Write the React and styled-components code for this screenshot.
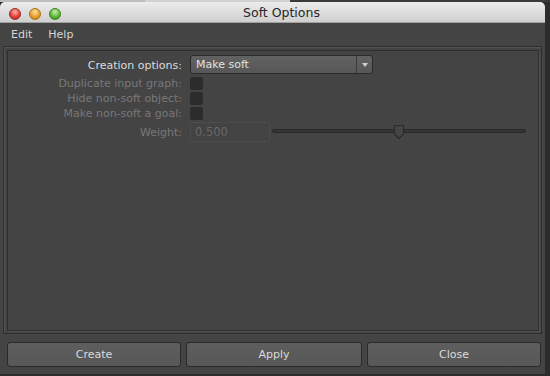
import React from "react";
import styled, { createGlobalStyle } from "styled-components";

const Global = createGlobalStyle`
  html, body { margin: 0; padding: 0; }
  body {
    width: 550px;
    height: 376px;
    overflow: hidden;
    background:
      linear-gradient(to right, #bdbdbd 0 145px, #d2d2d2 145px 290px, #3a3a3a 290px) top left / 100% 2px no-repeat,
      #2c2c2c;
    font-family: "DejaVu Sans", "Liberation Sans", sans-serif;
    font-size: 11px;
  }
`;

const Window = styled.div`
  margin-top: 2px;
  width: 545px;
  height: 372px;
  background: #444444;
  border-radius: 5px 5px 0 0;
  display: flex;
  flex-direction: column;
  overflow: hidden;
`;

const TitleBar = styled.div`
  position: relative;
  height: 21px;
  flex: none;
  display: flex;
  align-items: center;
  justify-content: center;
  padding-left: 18px;
  background: linear-gradient(#ececec, #cfcfcf);
  border-bottom: 1px solid #a0a0a0;
  box-sizing: border-box;
  color: #262626;
  font-size: 12.5px;
`;

const Lights = styled.div`
  position: absolute;
  left: 9px;
  top: 6px;
  display: flex;
  gap: 8px;
`;

const Light = styled.span`
  width: 12px;
  height: 12px;
  border-radius: 50%;
  box-sizing: border-box;
  border: 1px solid ${(p) => p.$edge};
  background: radial-gradient(circle at 50% 30%, ${(p) => p.$hi} 0, ${(p) => p.$c} 55%, ${(p) => p.$lo} 100%);
`;

const MenuBar = styled.div`
  height: 22px;
  flex: none;
  display: flex;
  align-items: center;
  gap: 16px;
  padding-left: 11px;
  color: #d6d6d6;
`;

const Frame = styled.div`
  margin: 1px 3px 0 3px;
  height: 288px;
  flex: none;
  box-sizing: border-box;
  border: 1px solid #2e2e2e;
  box-shadow: inset 1px 1px 0 #525252;
  padding: 3px 2px 2px 3px;
`;

const Inner = styled.div`
  height: 100%;
  box-sizing: border-box;
  border: 1px solid #2e2e2e;
  box-shadow: 1px 1px 0 #525252;
  padding-top: 4px;
`;

const Form = styled.div`
  display: grid;
  grid-template-columns: 174px 1fr;
  grid-template-rows: 20px 13px 13px 13px 20px;
  column-gap: 8px;
  row-gap: 2px;
  align-items: center;
`;

const Label = styled.div`
  text-align: right;
  color: ${(p) => (p.$disabled ? "#787878" : "#dcdcdc")};
  white-space: nowrap;
  line-height: 13px;
`;

const Select = styled.div`
  align-self: start;
  width: 183px;
  height: 19px;
  box-sizing: border-box;
  border: 1px solid #2a2a2a;
  border-radius: 3px;
  background: linear-gradient(#626262, #575757);
  display: flex;
  align-items: center;
  color: #e2e2e2;
`;

const SelectText = styled.span`
  flex: 1;
  padding-left: 5px;
`;

const SelectArrow = styled.span`
  width: 15px;
  height: 100%;
  border-left: 1px solid #3a3a3a;
  display: flex;
  align-items: center;
  justify-content: center;
  &::after {
    content: "";
    border-left: 3.5px solid transparent;
    border-right: 3.5px solid transparent;
    border-top: 4px solid #d0d0d0;
  }
`;

const Check = styled.span`
  display: block;
  width: 13px;
  height: 13px;
  border-radius: 2px;
  background: #2c2c2c;
`;

const WeightRow = styled.div`
  display: flex;
  align-items: center;
  gap: 2px;
  padding-right: 12px;
`;

const Field = styled.div`
  width: 80px;
  height: 20px;
  box-sizing: border-box;
  border: 1px solid #4d4d4d;
  border-radius: 2px;
  background: #434343;
  color: #686868;
  padding-left: 4px;
  display: flex;
  align-items: center;
  font-size: 11.5px;
`;

const Slider = styled.div`
  position: relative;
  flex: 1;
  height: 4px;
  margin-top: -2px;
  box-sizing: border-box;
  border: 1px solid #2a2a2a;
  border-radius: 2px;
  background: #353535;
`;

const Thumb = styled.svg`
  position: absolute;
  top: -6px;
  width: 12px;
  height: 16px;
`;

const ButtonBar = styled.div`
  display: grid;
  grid-template-columns: 174px 176px 174px;
  gap: 5px;
  padding: 8px 5px 0 7px;
`;

const Button = styled.div`
  height: 25px;
  box-sizing: border-box;
  border: 1px solid #2a2a2a;
  border-radius: 3px;
  background: linear-gradient(#5e5e5e, #575757);
  color: #dadada;
  display: flex;
  align-items: center;
  justify-content: center;
`;

export default function App() {
  const weight = 0.5;
  return (
    <>
      <Global />
      <Window>
        <TitleBar>
          <Lights>
            <Light $c="#e2443c" $hi="#ffb0a8" $lo="#a8201a" $edge="#9a2a22" />
            <Light $c="#e8a231" $hi="#ffe0a0" $lo="#b0700e" $edge="#a4701c" />
            <Light $c="#5cbb3c" $hi="#c8f0a8" $lo="#2f8a1c" $edge="#3a7e24" />
          </Lights>
          Soft Options
        </TitleBar>
        <MenuBar>
          <span>Edit</span>
          <span>Help</span>
        </MenuBar>
        <Frame>
          <Inner>
            <Form>
              <Label>Creation options:</Label>
              <Select>
                <SelectText>Make soft</SelectText>
                <SelectArrow />
              </Select>
              <Label $disabled>Duplicate input graph:</Label>
              <Check />
              <Label $disabled>Hide non-soft object:</Label>
              <Check />
              <Label $disabled>Make non-soft a goal:</Label>
              <Check />
              <Label $disabled>Weight:</Label>
              <WeightRow>
                <Field>0.500</Field>
                <Slider>
                  <Thumb
                    viewBox="0 0 12 16"
                    style={{ left: `calc(${weight * 100}% - 6px)` }}
                  >
                    <path
                      d="M1.5 1.5 H10.5 V10 L6 14.5 L1.5 10 Z"
                      fill="#454545"
                      stroke="#2a2a2a"
                      strokeWidth="1.2"
                    />
                  </Thumb>
                </Slider>
              </WeightRow>
            </Form>
          </Inner>
        </Frame>
        <ButtonBar>
          <Button>Create</Button>
          <Button>Apply</Button>
          <Button>Close</Button>
        </ButtonBar>
      </Window>
    </>
  );
}
